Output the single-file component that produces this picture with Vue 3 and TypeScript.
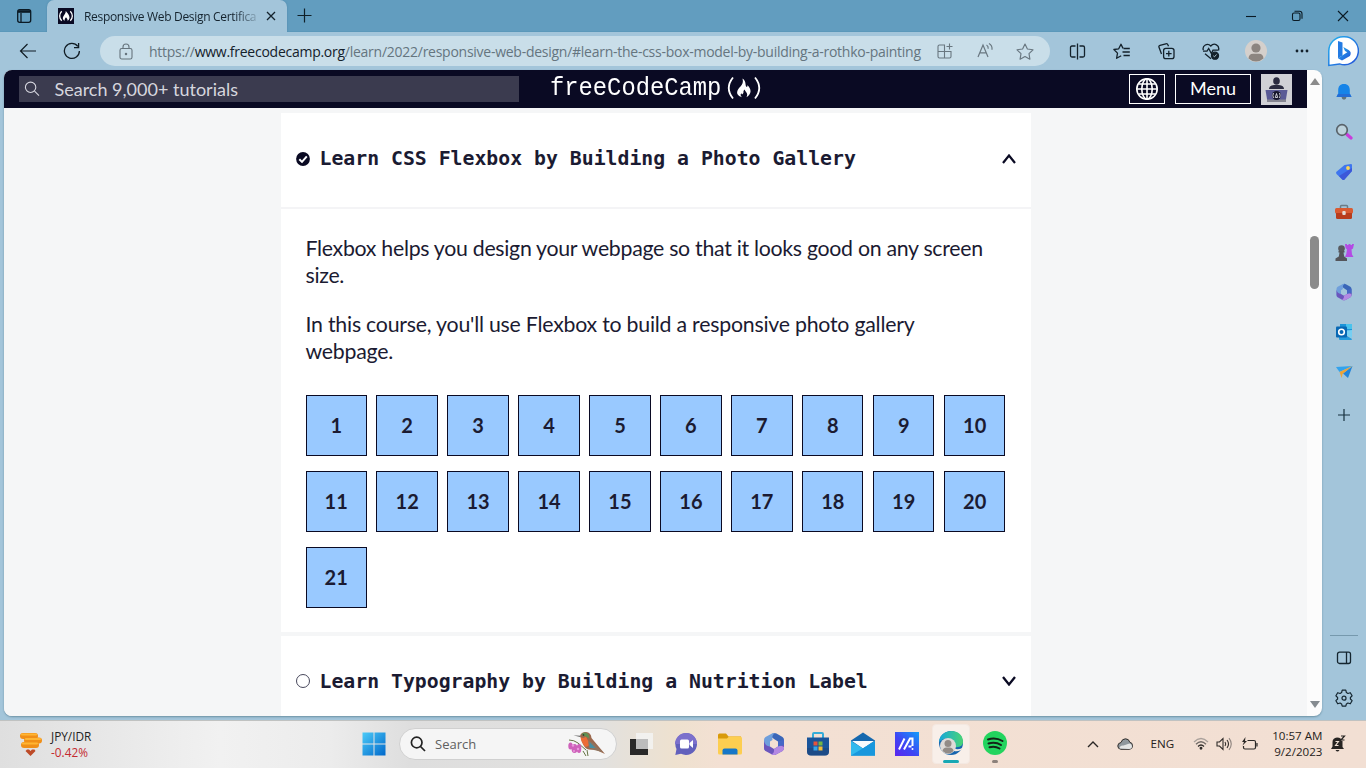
<script setup lang="ts">
const steps: number[] = Array.from({ length: 21 }, (_, i) => i + 1)
</script>

<template>
  <div class="screen">
    <header class="tabbar">
      <svg class="workspace" width="16" height="16" viewBox="0 0 16 16" fill="none" stroke="#0b1a24" stroke-width="1.3">
        <rect x="1.7" y="1.7" width="13" height="12.6" rx="2" /><path d="M2 3.500h12.500" stroke-width="2.600" /><path d="M5 5v9" />
      </svg>
      <div class="tab">
        <svg width="16" height="16" viewBox="0 0 16 16">
          <rect width="16" height="16" fill="#0a0a23" />
          <path d="M3.700 3.200C1 6 1 10 3.700 12.800M12.300 3.200C15 6 15 10 12.300 12.800" stroke="#fff" stroke-width="1.300" fill="none" />
          <path d="M7.800 3c1.500 1.800 3.700 4 3.700 6.500 0 1.500-.7 2.500-2 3.300.3-1.800-.8-2.300-1.500-3.500-.7 1.200-1.700 1.800-1.300 3.500C4.800 11.800 4.400 10 5.300 8.400 6.200 7 7.800 5.500 7.800 3z" fill="#fff" />
        </svg>
        <span class="tab-title">Responsive Web Design Certifica</span>
        <svg class="tab-x" width="10" height="10" viewBox="0 0 10 10" stroke="#14222c" stroke-width="1.3"><path d="M1 1l8 8M9 1l-8 8" /></svg>
      </div>
      <svg class="new-tab" width="15" height="15" viewBox="0 0 15 15" stroke="#0f2029" stroke-width="1.2"><path d="M7.500.5v14M.5 7.500h14" /></svg>
      <div class="window-buttons">
        <svg width="12" height="12" viewBox="0 0 12 12"><path d="M1 6.500h10" stroke="#0a1a24" stroke-width="1.1" /></svg>
        <svg width="12" height="12" viewBox="0 0 12 12" fill="none" stroke="#0a1a24" stroke-width="1.1"><rect x="1.500" y="3" width="7.500" height="7.500" rx="1.500" /><path d="M3.500 1.200h5a2.500 2.500 0 0 1 2.500 2.500v5" /></svg>
        <svg width="12" height="12" viewBox="0 0 12 12" stroke="#0a1a24" stroke-width="1.100"><path d="M1 1l10 10M11 1L1 11" /></svg>
      </div>
    </header>

    <nav class="toolbar">
      <svg class="back" width="18" height="16" viewBox="0 0 18 16" fill="none" stroke="#101c24" stroke-width="1.2"><path d="M17 8H1.500M8.500 1L1.500 8l7 7" /></svg>
      <svg class="reload" width="18" height="18" viewBox="0 0 18 18" fill="none" stroke="#101c24" stroke-width="1.3"><path d="M16.400 9A7.500 7.500 0 1 1 14.800 4.300M15.600 1v4.600H11" /></svg>
      <div class="address">
        <svg class="lock" width="14" height="17" viewBox="0 0 14 17" fill="none" stroke="#66747d" stroke-width="1.100"><rect x="1" y="5.500" width="12" height="10.500" rx="1.800" /><path d="M4 5.500V4a3 3 0 0 1 6 0v1.500" /><circle cx="7" cy="11" r=".7" fill="#66747d" /></svg>
        <span class="url">https://<b>www.freecodecamp.org</b>/learn/2022/responsive-web-design/#learn-the-css-box-model-by-building-a-rothko-painting</span>
        <svg class="apps" width="16" height="16" viewBox="0 0 16 16" fill="none" stroke="#697780" stroke-width="1.100"><path d="M8 2H2.500Q1 2 1 3.500V13.500Q1 15 2.500 15H12.500Q14 15 14 13.500V8.500H1M7.500 2v13M12.500.5v6M9.500 3.500h6" /></svg>
        <svg class="read" width="17" height="16" viewBox="0 0 17 16" fill="none" stroke="#697780" stroke-width="1.200"><path d="M1 14L6 2l5 12M2.800 9.800h6.400M9.500 2q2 1 1.700 3.800M12 .6q3.500 2 3 6.200" /></svg>
        <svg class="star" width="18" height="17" viewBox="0 0 18 17" fill="none" stroke="#697780" stroke-width="1.150" stroke-linejoin="round"><path d="M9 1l2.400 5 5.600.8-4 3.900.9 5.500-4.900-2.600-4.900 2.600.9-5.500-4-3.900L6.600 6z" /></svg>
      </div>
      <div class="tools">
        <span><svg width="17" height="17" viewBox="0 0 17 17" fill="none" stroke="#13212b" stroke-width="1.300"><path d="M6.500 3H3Q1.500 3 1.500 4.500v8Q1.500 14 3 14h3.500M10.500 3H14q1.500 0 1.500 1.500v8Q15.500 14 14 14h-3.500M8.500.5v16" /></svg></span>
        <span><svg width="18" height="17" viewBox="0 0 18 17" fill="none" stroke="#13212b" stroke-width="1.300" stroke-linejoin="round"><path d="M10 5.400L8 1.200 5.700 5.800.9 6.500l3.600 3.600-.9 5.200 4.600-2.500M10.500 5.500h6.300M9.500 9h7.300M10.500 12.500h6.300" /></svg></span>
        <span><svg width="17" height="17" viewBox="0 0 17 17" fill="none" stroke="#13212b" stroke-width="1.300"><rect x="5.600" y="5.300" width="10.400" height="10.400" rx="2.200" /><path d="M3.500 11L1 4.200Q.5 2.800 2 2.300L7.800.8q1.600-.4 2.100 1l.6 1.500M10.800 7.800v5.600M8 10.600h5.600" /></svg></span>
        <span><svg width="18" height="17" viewBox="0 0 18 17" fill="none" stroke="#13212b" stroke-width="1.300"><path d="M1.300 7.200C0 2.500 5.500-.7 8.800 3 12-.7 18 2 16.500 7.500M1 8.200h4l1.700-2.700 2.700 5L11 7.200h5M3 10.700l6 5" /><circle cx="13" cy="12.700" r="3.500" fill="#13212b" /><path d="M11.300 12.800l1.200 1 2-2.300" stroke="#b9d1dd" stroke-width=".9" /></svg></span>
        <span><svg width="22" height="22" viewBox="0 0 22 22"><circle cx="11" cy="11" r="11" fill="#d5d0cc" /><circle cx="11" cy="8" r="4.600" fill="#8c8580" /><path d="M3.500 18.500Q3.800 13.800 8 13.800h6q4.200 0 4.500 4.700A11 11 0 0 1 3.500 18.500z" fill="#8c8580" /></svg></span>
        <span class="dots"><svg width="14" height="4" viewBox="0 0 14 4" fill="#13212b"><circle cx="2" cy="2" r="1.400" /><circle cx="7" cy="2" r="1.400" /><circle cx="12" cy="2" r="1.400" /></svg></span>
      </div>
      <svg class="bing" width="32" height="32" viewBox="0 0 32 32">
        <defs><linearGradient id="bg1" x1="0" y1="0" x2="1" y2="1"><stop offset="0" stop-color="#22b2ee" /><stop offset="1" stop-color="#2350d8" /></linearGradient></defs>
        <path d="M16.500 1.800a14 14 0 1 1-4 27.100L1.800 30.500V16A14.300 14.300 0 0 1 16.500 1.800z" fill="#fff" stroke="url(#bg1)" stroke-width="1.500" />
        <path d="M11 6l4.500 1.500V20.500L11 23.300z" fill="#237be3" /><path d="M11 23.300l4 2.200 7.900-4.600q2.200-3.900-1.300-6L16.300 12l1.700 4.100 2.300 1.100z" fill="url(#bg1)" />
      </svg>
    </nav>

    <div class="middle">
      <main class="page">
        <div class="site">
          <div class="site-header">
            <div class="site-search">
              <svg width="16" height="16" viewBox="0 0 16 16" fill="none" stroke="#d6d6df" stroke-width="1.100"><circle cx="6.600" cy="6.300" r="5.200" /><path d="M10.500 10.200l4.500 4.500" /></svg>
              <span>Search 9,000+ tutorials</span>
            </div>
            <div class="logo">
              <span class="logo-name">freeCodeCamp</span>
              <svg width="38" height="26" viewBox="0 0 38 26" fill="none" stroke="#fff" stroke-width="1.800"><path d="M8 2.500Q-.5 13 8 23.500M30 2.500Q38.500 13 30 23.500" /><path stroke="none" fill="#fff" d="M17.500 3.500c4 3 2.500 6 3.700 8 .8 1 1.700 0 1-1.500 4.600 4.200 4.600 9-.7 12.200 2-4.200-.8-4.200-1.800-7.700-2.400 1.800-.2 2.700-2 4.500-.7.700-1.500-.2-1.300-1-1.500 1.500-.6 3.300.6 4.200C9.500 20 12 15 15.500 11.500 17.500 9.300 18.500 7 17.500 3.500z" /></svg>
            </div>
            <div class="actions">
              <span class="lang"><svg width="24" height="24" viewBox="0 0 24 24" fill="none" stroke="#fff" stroke-width="1.600"><circle cx="12" cy="12" r="10.200" /><ellipse cx="12" cy="12" rx="5.200" ry="10.200" /><path d="M12 1.800v20.400M1.800 12h20.400M3.400 7h17.200M3.400 17h17.200" /></svg></span>
              <span class="menu">Menu</span>
              <svg width="31" height="31" viewBox="0 0 31 31"><rect width="31" height="31" fill="#d0d0d5" /><ellipse cx="15.500" cy="7" rx="3.300" ry="3.800" fill="#2a2a40" /><path d="M8 15q0-3.500 5-4h5q5 .5 5 4z" fill="#2a2a40" /><path d="M4.500 16h22L24.500 28h-18z" fill="#5a5a96" /><path d="M6 25.500h19V28H6z" fill="#858591" /><circle cx="15.500" cy="21.500" r="4.500" fill="#17172c" /><path d="M12.500 19q-1.300 2.500 0 5M18.500 19q1.300 2.500 0 5M14.300 23.500l1.200-4 1.200 4z" stroke="#dedee8" stroke-width=".9" fill="none" /></svg>
            </div>
          </div>
          <div class="content">
            <section class="card">
              <div class="card-head">
                <svg width="14" height="14" viewBox="0 0 14 14"><circle cx="7" cy="7" r="6.900" fill="#0a0a23" /><path d="M3.300 7.200l2.700 2.700 4.800-5.500" stroke="#fff" stroke-width="2" fill="none" /></svg>
                <h3>Learn CSS Flexbox by Building a Photo Gallery</h3>
                <svg class="chev" width="14" height="10" viewBox="0 0 14 10" fill="none" stroke="#0a0a23" stroke-width="2.200"><path d="M1 9l6-7.500L13 9" /></svg>
              </div>
              <div class="card-body">
                <p>Flexbox helps you design your webpage so that it looks good on any screen<br>size.</p>
                <p class="second">In this course, you'll use Flexbox to build a responsive photo gallery<br>webpage.</p>
                <div class="grid"><span v-for="n in steps" :key="n">{{ n }}</span></div>
              </div>
            </section>
            <section class="card">
              <div class="card-head next">
                <svg width="14" height="14" viewBox="0 0 14 14"><circle cx="7" cy="7" r="6.500" fill="#fff" stroke="#33334a" stroke-width=".9" /></svg>
                <h3>Learn Typography by Building a Nutrition Label</h3>
                <svg class="chev" width="14" height="10" viewBox="0 0 14 10" fill="none" stroke="#0a0a23" stroke-width="2.300"><path d="M1 1l6 7.500L13 1" /></svg>
              </div>
            </section>
          </div>
        </div>
        <div class="scroll">
          <svg width="10" height="7" viewBox="0 0 10 7"><path d="M5 0L10 7H0z" fill="#8b8b8b" /></svg>
          <i class="thumb"></i>
          <svg class="down" width="10" height="7" viewBox="0 0 10 7"><path d="M5 7L10 0H0z" fill="#858b90" /></svg>
        </div>
      </main>
      <aside class="side">
        <span><svg width="18" height="18" viewBox="0 0 18 18"><path d="M6.500 14h5q-.5 2.800-2.500 2.800T6.500 14z" fill="#61737c" /><path d="M9 1c4 0 5.800 2.600 5.800 6v3.500L16.500 14h-15l1.700-3.500V7C3.200 3.600 5 1 9 1z" fill="#1684e8" /><path d="M3 11h12l1.500 3h-15z" fill="#236dd5" /></svg></span>
        <span><svg width="18" height="18" viewBox="0 0 18 18"><path d="M12 11.500l4 3.500" stroke="#c93cdc" stroke-width="3.200" stroke-linecap="round" /><circle cx="7" cy="7" r="5.300" fill="#bcd2dc" stroke="#59636a" stroke-width="1.700" /></svg></span>
        <span><svg width="18" height="18" viewBox="0 0 18 18"><path d="M9.500 2L16 1q1 0 1 1v6l-7.500 8.500q-1 1-2.200 0L1.500 11q-1-1.200 0-2.200z" fill="#3f76ef" /><path d="M4 13L17 5v3l-7.500 8.500q-1 1-2.200 0z" fill="#3c58d9" /><circle cx="13" cy="5" r="1.900" fill="#ffd454" /></svg></span>
        <span><svg width="18" height="16" viewBox="0 0 18 16"><path d="M5.500 4V2.500q0-1 1-1h5q1 0 1 1V4" fill="none" stroke="#6b7d86" stroke-width="1.500" /><rect y="4" width="18" height="5.500" rx="1.500" fill="#d95b32" /><path d="M1 9h16v4.500q0 1.500-1.500 1.500h-13Q1 15 1 13.500z" fill="#b83d1d" /><rect x="7.300" y="7" width="3.400" height="4" rx="1" fill="#e4dbd4" /></svg></span>
        <span><svg width="20" height="19" viewBox="0 0 20 19"><path d="M11 1h2v1h1.500V1h2v1H18V1h2l-1 4.500-1.500 1 .5 5 1.500 2.500H11l1.300-3L13 6.500 11.500 5z" fill="#b34be4" /><circle cx="7.500" cy="5.500" r="3.300" fill="#58595e" /><path d="M4.500 8h6v1.500H9.500l.7 4L13 15.500V18H1.500v-2.500l3.300-2 .7-4h-1z" fill="#54555a" /></svg></span>
        <span><svg width="18" height="18" viewBox="0 0 24 24"><use href="#m365" /></svg></span>
        <span><svg width="18" height="18" viewBox="0 0 18 18"><path d="M5 1h12v8H5z" fill="#1b94d9" /><path d="M11 1h6v5h-6z" fill="#49c3ed" /><path d="M4 8l13 7V7z" fill="#76cff2" /><path d="M4 8l13 8q0 1-1 1H5q-1 0-1-1z" fill="#249bdd" /><rect x="1" y="3.500" width="11" height="11" rx="1" fill="#0868b4" /><circle cx="6.500" cy="9" r="2.800" stroke="#fff" stroke-width="1.600" fill="none" /></svg></span>
        <span><svg width="18" height="16" viewBox="0 0 18 16"><path d="M1 3L17.500 2 4.500 8z" fill="#33a3ed" /><path d="M17.500 2L13 14 8 9.500z" fill="#2185dc" /><path d="M4.500 8L17.500 2 7.500 10l-.8 4z" fill="#eda336" /></svg></span>
        <span class="plus"><svg width="12" height="12" viewBox="0 0 12 12" stroke="#17303e" stroke-width="1.200"><path d="M6 0v12M0 6h12" /></svg></span>
        <i class="rule"></i>
        <span><svg width="16" height="14" viewBox="0 0 16 14" fill="none" stroke="#152630" stroke-width="1.300"><rect x="1.500" y="1.200" width="13" height="11.300" rx="2" /><path d="M10.500 1v12" /></svg></span>
        <span><svg width="18" height="18" viewBox="0 0 18 18" fill="none" stroke="#152630" stroke-width="1.200" stroke-linejoin="round"><path d="M7.200 1.200h3.600l.6 2.400 1.500.9 2.400-.8 1.800 3.100-1.700 1.700v1.500l1.700 1.700-1.800 3.100-2.400-.8-1.500.9-.6 2.300H7.200l-.6-2.300-1.500-.9-2.400.8-1.800-3.100L2.600 10V8.500L.9 6.800l1.800-3.100 2.400.8 1.500-.9z" /><circle cx="9" cy="9.200" r="2" /></svg></span>
      </aside>
    </div>

    <footer class="taskbar">
      <svg class="coins" width="24" height="26" viewBox="0 0 24 26"><g fill="#f08f18"><rect x="1" y="2" width="18" height="6" rx="3" /><rect x="5" y="6.500" width="18" height="6" rx="3" /><rect x="2" y="11" width="18" height="6" rx="3" /></g><path d="M3 3.500h14M7 8h14M4 12.500h14" stroke="#ffb533" stroke-width="2.200" stroke-linecap="round" /><path d="M8 18.500l2 0 1.500 1.500 1.500-1.500h2.500l1 1.500-5 5-5-5z" fill="#bd4b28" /></svg>
      <div class="rate"><span>JPY/IDR</span><span class="neg">-0.42%</span></div>
      <svg class="win" width="24" height="24" viewBox="0 0 24 24"><defs><linearGradient id="w" x1="0" y1="0" x2="1" y2="1"><stop offset="0" stop-color="#4ccbf8" /><stop offset="1" stop-color="#0068cb" /></linearGradient></defs><path d="M.5.500h11v11H.5zM12.500.500h11v11h-11zM.5 12.500h11v11H.5zM12.500 12.500h11v11h-11z" fill="url(#w)" /></svg>
      <div class="search">
        <svg width="16" height="16" viewBox="0 0 16 16" fill="none" stroke="#232323" stroke-width="1.700"><circle cx="6.700" cy="6.500" r="5.300" /><path d="M10.500 10.500l4.500 4.500" /></svg>
        <span>Search</span>
        <svg class="bird" width="40" height="26" viewBox="0 0 40 26">
          <path d="M2 9q5 0 9 3l8 7M16 20l3 5M20 19l1 6" stroke="#657344" stroke-width="1" fill="none" />
          <g fill="#cf62bb"><ellipse cx="3.500" cy="15" rx="2.200" ry="3.500" /><ellipse cx="7.500" cy="17.500" rx="3" ry="4.500" /><ellipse cx="12" cy="17.500" rx="2.300" ry="4.500" /></g><g fill="#e89adb"><circle cx="6" cy="14.500" r="1.200" /><circle cx="11" cy="18" r="1.200" /><circle cx="7" cy="20" r="1" /></g>
          <path d="M6.500 4.500L13 4.700 14 6z" fill="#444" />
          <path d="M13 5q1-4 6-4 5 .5 5.500 6l5 6 8.500 10L28 18.500q-8 1.500-11-3.500-2.500-4-3-8z" fill="#9b684d" />
          <path d="M13.500 6q3 2 5.500-.5 2 5 4 6-1 4-4.500 4.500-4.500-4.500-5-10z" fill="#ec6c36" /><path d="M14.500 3.500q3-4 7 0l1 4-4-2z" fill="#629052" /><path d="M21 10q6 1 9 6l6 5-9-2q-6-2-6-9z" fill="#8e7561" /><path d="M22.500 11l6 6h-6z" fill="#478fa2" /><circle cx="16.500" cy="4" r=".8" fill="#202a20" />
        </svg>
      </div>
      <div class="apps-row">
        <span><svg width="24" height="24" viewBox="0 0 24 24"><path d="M0 7h18v16H0z" fill="#292929" /><path d="M6 1h17v16H6z" fill="#f4f4f4" fill-opacity=".82" /><path d="M6 7h12v10H6z" fill="#bcbcbc" /></svg></span>
        <span><svg width="24" height="24" viewBox="0 0 24 24"><path d="M12 1a11 11 0 1 1-5 20.800L1.300 23 2.500 17A11 11 0 0 1 12 1z" fill="#6260bc" /><path d="M12 1a11 11 0 0 1 11 11H1A11 11 0 0 1 12 1z" fill="#7c70cc" /><rect x="6" y="7.500" width="9" height="9" rx="1.500" fill="#fff" /><path d="M15.500 11l3.500-3v8l-3.500-3z" fill="#fff" /></svg></span>
        <span><svg width="24" height="22" viewBox="0 0 24 22"><path d="M0 2Q0 .5 1.500.5H8l2.500 3H23v4H0z" fill="#d99a0a" /><path d="M0 5.500h9l2-2h11q2 0 2 2V20q0 1.500-1.500 1.500h-21Q0 21.500 0 20z" fill="#fdce50" /><path d="M4.500 21.500v-4q0-2 2-2h11q2 0 2 2v4z" fill="#1677c8" /></svg></span>
        <span><svg width="24" height="24" viewBox="0 0 24 24"><g id="m365"><path d="M10.500 1.500q2-1 4 0L20.500 5Q22 6 22 8v8.500l-6-3.500V9.500L12 7 9.500 5z" fill="#3a66b8" /><path d="M13 1q-3.500 2-2.500 7L8 9.500v5L3.500 19Q2 18 2 16V8q0-2 1.500-3L10 1.500q1.500-.7 3-.5z" fill="#6f9fdc" /><path d="M2 9q1 5 6 5.500l4 2.500 4-2.500 6-2V16q0 2-1.500 3L14 22.500q-2 1-4 0L3.500 19Q2 18 2 16z" fill="#6b56bd" /><path d="M12 17l4-2.500V12l6 3v1q0 2-1.500 3L14 22.500q-2.500 1-4.500 0 3-1.500 2.500-5.500z" fill="#b389e3" /><path d="M16 9.500l6-2V13l-6 1.500z" fill="#4667c6" /></g></svg></span>
        <span><svg width="24" height="24" viewBox="0 0 24 24"><path d="M7 7V2q0-1 1-1h8q1 0 1 1v5" fill="none" stroke="#35acd8" stroke-width="2" /><path d="M1 5.500h22v14q0 4-4 4H5q-4 0-4-4z" fill="#19549a" /><path d="M1 16h22v3.500q0 4-4 4H5q-4 0-4-4z" fill="#204173" opacity=".5" /><path d="M7.500 9.500h4v4h-4z" fill="#e5543b" /><path d="M12.500 9.500h4v4h-4z" fill="#73b644" /><path d="M7.500 14.500h4v4h-4z" fill="#35a5e8" /><path d="M12.500 14.500h4v4h-4z" fill="#f3bd36" /></svg></span>
        <span><svg width="24" height="24" viewBox="0 0 24 24"><path d="M0 8.500L12 .5l12 8v15H0z" fill="#1668ae" /><path d="M1 9h22L12 16.500z" fill="#f7fbfd" /><path d="M0 9l12 7.500L24 9v14.500H0z" fill="#32b9ed" /><path d="M24 9L0 23.500h24z" fill="#1897dd" /></svg></span>
        <span><svg width="24" height="24" viewBox="0 0 24 24"><defs><linearGradient id="as" x1="0" y1="1" x2="1" y2="0"><stop stop-color="#5b25ee" /><stop offset=".45" stop-color="#3e46f4" /><stop offset="1" stop-color="#139dfa" /></linearGradient></defs><path d="M0 0h24v24H0z" fill="url(#as)" /><path d="M4 17.500L9.500 6.500M9 17.500L15 6.500h2.500v7.500M13.500 14.500h3" stroke="#fff" stroke-width="2" fill="none" /><circle cx="17.500" cy="17" r="1" fill="#fff" /></svg></span>
        <span class="active"><svg width="24" height="24" viewBox="0 0 24 24"><defs><linearGradient id="ed" x1="0" y1="0" x2="1" y2="0"><stop stop-color="#17a7da" /><stop offset="1" stop-color="#49d575" /></linearGradient></defs><circle cx="12" cy="12" r="12" fill="#1564ae" /><path d="M0 11C1-3 24-4 24 11q0 6-9 5l-2-6Q8 4 0 11z" fill="url(#ed)" /><path d="M14 17q6 3 10-1-1 1-2 3-4 2-7 1z" fill="#f3ebe5" /><circle cx="9" cy="15" r="8" fill="#dedad7" /><circle cx="9" cy="12.500" r="3.500" fill="#928b87" /><path d="M3.500 20q.5-3.500 4-3.500h3q3.500 0 4 3.500-5 5-11 0z" fill="#928b87" /></svg><i></i></span>
        <span class="spot"><svg width="24" height="24" viewBox="0 0 24 24"><circle cx="12" cy="12" r="12" fill="#23d45e" /><path d="M5 8.500q7.500-2.500 14.500 1.500M5.500 12.500q7-2 12.500 1.500M6.500 16.300q5.500-1.500 10 1.200" stroke="#142318" stroke-width="2" fill="none" stroke-linecap="round" /></svg><i></i></span>
      </div>
      <div class="tray">
        <svg class="t-chev" width="12" height="8" viewBox="0 0 12 8" fill="none" stroke="#2a2725" stroke-width="1.400"><path d="M1 7l5-5 5 5" /></svg>
        <svg class="cloud" width="16" height="12" viewBox="0 0 16 12"><path d="M4 11.300Q.8 11 .8 8T4 4.500Q5 .8 8.500.8q3.500 0 4.300 3.500 2.700.3 2.700 3.500t-3 3.500z" fill="#8f979d" stroke="#322f2d" /><path d="M2.500 10.500q.5-3.500 4-3l6-2q2.500.5 2.500 3t-3 2.500z" fill="#e4e5e5" /></svg>
        <span class="eng">ENG</span>
        <svg class="wifi" width="16" height="13" viewBox="0 0 16 13" fill="none" stroke="#302c2a" stroke-width="1.300"><path d="M1 5q7-7 14 0" stroke="#aaa19b" /><path d="M3 7.300q5-5 10 0" stroke="#716a66" /><path d="M5 9.500q3-3 6 0" /><circle cx="8" cy="11.300" r=".8" fill="#302c2a" /></svg>
        <svg class="sound" width="16" height="14" viewBox="0 0 16 14" fill="none" stroke="#302c2a" stroke-width="1.100"><path d="M1 5h2.500L7 1.500v11L3.500 9H1zM9 5q1.500 2 0 4M11 3q3 4 0 8" /><path d="M13 1.200q4.500 5.800 0 11.600" stroke="#8f8580" /></svg>
        <svg class="battery" width="17" height="14" viewBox="0 0 17 14" fill="none" stroke="#2b2826" stroke-width="1.200"><path d="M6.500 3.500H13q1.500 0 1.500 1.500v5.500Q14.500 12 13 12H4q-1.500 0-1.500-1.500V9M16 6v3.500" /><path d="M4.500 0L1 5h2L1.500 8.500 6 4H4z" fill="#2b2826" stroke="none" /></svg>
        <div class="clock"><span>10:57 AM</span><span>9/2/2023</span></div>
        <svg class="bell" width="15" height="17" viewBox="0 0 15 17"><path d="M6 2.500Q10.500 2.500 11.500 6v6l1.500 2H0l1.500-2.500V7q0-4 4.500-4.500zM4.500 15h4q-2 3-4 0z" fill="#272422" /><path d="M4.500 6.500h3l-3 4h3" fill="none" stroke="#f3e3d6" stroke-width="1.100" /><path d="M9 0h5.500v6h-4z" fill="#f2dfd3" /><path d="M10 1h3.500L10 5h3.500" fill="none" stroke="#272422" stroke-width="1.200" /></svg>
      </div>
    </footer>
  </div>
</template>

<style>
html, body { margin: 0; overflow: hidden; }
</style>

<style scoped>
* { box-sizing: border-box; }
svg { display: block; flex: none; }
.screen { width: 1366px; height: 768px; overflow: hidden; display: flex; flex-direction: column; background: #a3c5da; font-family: "Open Sans", "Noto Sans", sans-serif; white-space: nowrap; }
.tabbar { height: 32px; background: #629dbf; display: flex; align-items: center; flex: none; border-bottom: 1px solid #5b98ba; }
.workspace { margin-left: 16px; }
.tab { align-self: stretch; width: 240px; height: 32px; margin-left: 15px; padding: 0 11px; display: flex; align-items: center; background: #a3c5da; border-radius: 7px 7px 0 0; box-shadow: 0 0 2px #4c86a8; clip-path: inset(0 -3px 0 -3px); }
.tab-title { width: 173px; margin-left: 10px; font-size: 12px; letter-spacing: -.31px; color: #14232e; -webkit-mask-image: linear-gradient(90deg, #000 150px, transparent 178px); mask-image: linear-gradient(90deg, #000 150px, transparent 178px); }
.tab-x { margin-left: 9px; }
.new-tab { margin-left: 10px; }
.window-buttons { display: flex; gap: 34px; margin-left: auto; margin-right: 17px; }
.toolbar { height: 38px; display: flex; align-items: center; flex: none; }
.back { margin-left: 19px; }
.reload { margin-left: 26px; }
.address { width: 950px; height: 30px; margin-left: 19px; border-radius: 15px; background: #c9dee9; display: flex; align-items: center; }
.lock { margin-left: 19px; }
.url { width: 773px; margin-left: 16px; font-size: 14px; letter-spacing: -.26px; color: #65757f; }
.url b { font-weight: 400; color: #14212b; }
.apps { margin-left: 15px; }
.read { margin-left: 24px; }
.star { margin-left: 22px; }
.tools { display: flex; margin-left: 5px; }
.tools span { width: 44.6px; height: 30px; display: flex; align-items: center; justify-content: center; }
.tools .dots { padding-left: 3px; }
.bing { margin-left: 4px; }
.middle { height: 650px; display: flex; flex: none; }
.page { width: 1318px; height: 646px; margin-left: 4px; display: flex; border-radius: 8px; overflow: hidden; background: #fcfcfc; box-shadow: 0 1px 2px #6c91a5; flex: none; }
.site { width: 1303px; display: flex; flex-direction: column; background: #f5f6f7; }
.site-header { height: 38px; background: #0a0a23; color: #fff; display: flex; align-items: center; font-family: Lato, sans-serif; flex: none; }
.site-search { width: 500px; height: 26px; margin-left: 15px; padding-left: 5px; display: flex; align-items: center; gap: 14.500px; background: #3b3b4f; color: #d6d6de; font-size: 18px; }
.logo { display: flex; align-items: center; margin-left: 31px; height: 38px; }
.logo-name { font: 23.8px/30px "Liberation Mono", monospace; transform: scaleY(1.08); margin-top: 0; }
.logo svg { margin-left: 4px; margin-top: -2px; }
.actions { display: flex; align-items: center; gap: 10px; margin-left: auto; margin-right: 15px; }
.lang { width: 36px; height: 30px; border: 1px solid #fff; display: flex; align-items: center; justify-content: center; }
.menu { width: 76px; height: 30px; border: 1px solid #fff; font-size: 18px; line-height: 27px; text-align: center; }
.content { padding: 5px 276px 0 277px; display: flex; flex-direction: column; gap: 4px; color: #1b1b32; }
.card { width: 750px; background: #fff; }
.card-head { height: 96px; border-bottom: 2px solid #f4f4f6; display: flex; align-items: center; padding: 0 15px 2px; }
.card-head.next { height: 92px; padding-bottom: 0; }
.card-head h3 { margin: 0 0 0 9.500px; font: 700 19.810px/28px "DejaVu Sans Mono", monospace; }
.card-head.next h3 { padding-top: 2px; }
.chev { margin-left: auto; }
.card-body { height: 423px; padding: 26px 24.500px 0; }
.card-body p { margin: 0 0 22px; font: 21.300px/27px Lato, sans-serif; letter-spacing: -.29px; }
.card-body p.second { letter-spacing: -.23px; }
.grid { display: grid; grid-template-columns: repeat(10, 61.400px); column-gap: 9.550px; row-gap: 15px; padding-top: 8px; }
.grid span { height: 61px; border: 1px solid #0a0a23; background: #99c9ff; font: 700 20px/58px Lato, sans-serif; text-align: center; }
.scroll { width: 15px; display: flex; flex-direction: column; align-items: center; padding: 8px 0; }
.thumb { width: 9px; height: 53px; margin-top: 151px; border-radius: 5px; background: #8b8b8b; }
.down { margin-top: auto; }
.side { width: 44px; padding-top: 2px; display: flex; flex-direction: column; align-items: center; }
.side span { width: 44px; height: 40px; display: flex; align-items: center; justify-content: center; flex: none; }
.side .plus { margin-top: 3px; }
.rule { width: 28px; height: 1px; background: #7699ad; margin-top: 200px; margin-bottom: 2px; }
.taskbar { height: 48px; display: flex; align-items: center; padding-bottom: 2px; border-top: 1px solid #c0c2c1; background: linear-gradient(90deg, #dfdfdf 0, #f1f1f1 220px, #ececec 330px, #dedede 410px, #e2e1df 600px, #eee1cf 675px, #f3e0d3 720px, #f2dfd3 100%); flex: none; color: #222; }
.coins { margin-left: 19px; }
.rate { width: 80px; margin-left: 8px; display: flex; flex-direction: column; font-size: 11.800px; line-height: 16px; }
.neg { color: #c42b30; }
.win { margin-left: 230.500px; }
.search { width: 218px; height: 32px; margin-left: 13.500px; border-radius: 16px; background: #f5f5f5; border: 1px solid #d0d0d0; display: flex; align-items: center; padding-left: 10px; font-size: 13px; color: #606060; }
.search span { margin-left: 9px; }
.bird { margin-left: auto; margin-right: 9px; }
.apps-row { display: flex; align-items: center; margin-left: 3px; }
.apps-row span { width: 44.100px; height: 40px; display: flex; align-items: center; justify-content: center; }
.apps-row .active, .apps-row .spot { flex-direction: column; padding-top: 6px; }
.apps-row .active { width: 38px; margin: 0 3px; border-radius: 4px; background: #f8efe9; border: 1px solid #f3e8e1; }
.active i { width: 16px; height: 3px; margin-top: 5px; border-radius: 2px; background: #18a8b4; }
.spot i { width: 6px; height: 3px; margin-top: 5px; border-radius: 2px; background: #8c817b; }
.tray { display: flex; align-items: center; margin-left: auto; margin-right: 20px; color: #252220; font-size: 11.600px; }
.cloud { margin-left: 18px; }
.eng { margin-left: 18px; width: 25px; }
.wifi { margin-left: 17px; }
.sound { margin-left: 7px; }
.battery { margin-left: 9px; }
.clock { width: 59px; margin-left: 6px; display: flex; flex-direction: column; align-items: flex-end; line-height: 16px; }
.bell { margin-left: 8.500px; }
</style>
